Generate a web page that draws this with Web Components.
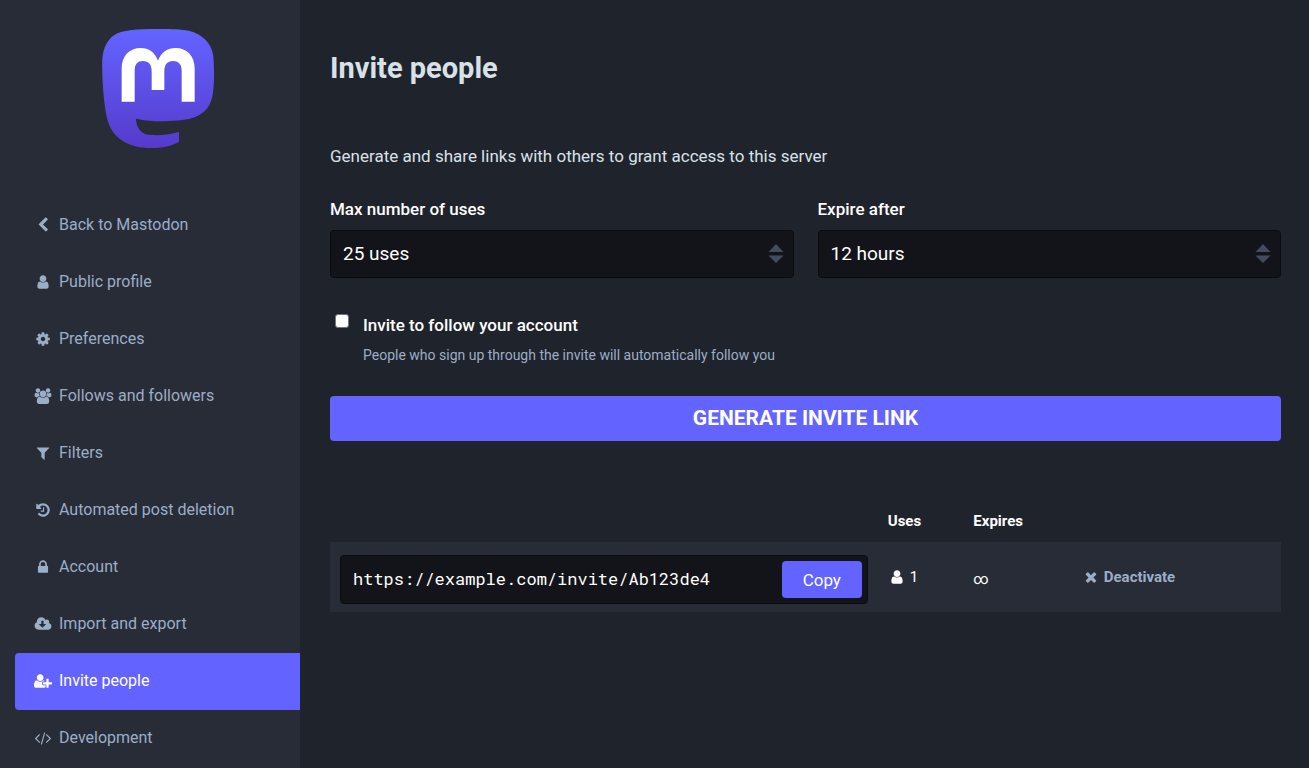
<!DOCTYPE html>
<html lang="en">
<head>
  <meta charset="utf-8">
  <meta name="viewport" content="width=device-width, initial-scale=1">
  <title>Invite people - Mastodon</title>
  <style>
    :root {
      --bg: #1f232b;
      --panel: #282c37;
      --field: #131419;
      --field-border: #0a0b0e;
      --accent: #6364ff;
      --text: #d9e1e8;
      --muted: #9baec8;
      --arrow: #444b5d;
    }
    body {
      margin: 0;
      background: var(--bg);
      color: var(--text);
      font-family: Roboto, sans-serif;
      font-size: 17px;
      line-height: 20px;
    }
  </style>
</head>
<body>
  <admin-layout>
    <mastodon-logo slot="sidebar"></mastodon-logo>
    <side-nav slot="sidebar">
      <nav-item href="#home" icon="chevron-left">Back to Mastodon</nav-item>
      <nav-item href="#profile" icon="user">Public profile</nav-item>
      <nav-item href="#preferences" icon="cog">Preferences</nav-item>
      <nav-item href="#relationships" icon="users">Follows and followers</nav-item>
      <nav-item href="#filters" icon="filter">Filters</nav-item>
      <nav-item href="#deletion" icon="history">Automated post deletion</nav-item>
      <nav-item href="#account" icon="lock">Account</nav-item>
      <nav-item href="#export" icon="cloud-download">Import and export</nav-item>
      <nav-item href="#invites" icon="user-plus" active>Invite people</nav-item>
      <nav-item href="#development" icon="code">Development</nav-item>
    </side-nav>
    <page-heading>Invite people</page-heading>
    <invite-form></invite-form>
    <invite-table></invite-table>
  </admin-layout>

  <script>
    const ICONS = {
      'chevron-left': 'M1427 301l-531 531 531 531q19 19 19 45t-19 45l-166 166q-19 19-45 19t-45-19l-742-742q-19-19-19-45t19-45l742-742q19-19 45-19t45 19l166 166q19 19 19 45t-19 45z',
      'user': 'M1536 1399q0 109-62.5 187t-150.5 78h-854q-88 0-150.5-78t-62.5-187q0-85 8.5-160.5t31.5-152 58.5-131 94-89 134.5-34.5q131 128 313 128t313-128q76 0 134.5 34.5t94 89 58.5 131 31.5 152 8.5 160.5zm-256-887q0 159-112.5 271.5t-271.5 112.5-271.5-112.5-112.5-271.5 112.5-271.5 271.5-112.5 271.5 112.5 112.5 271.5z',
      'cog': 'M1152 896q0-106-75-181t-181-75-181 75-75 181 75 181 181 75 181-75 75-181zm512-109v222q0 12-8 23t-20 13l-185 28q-19 54-39 91 35 50 107 138 10 12 10 25t-9 23q-27 37-99 108t-94 71q-12 0-26-9l-138-108q-44 23-91 38-16 136-29 186-7 28-36 28h-222q-14 0-24.5-8.5t-11.5-21.5l-28-184q-49-16-90-37l-141 107q-10 9-25 9-14 0-25-11-126-114-165-168-7-10-7-23 0-12 8-23 15-21 51-66.5t54-70.5q-27-50-41-99l-183-27q-13-2-21-12.5t-8-23.5v-222q0-12 8-23t19-13l186-28q14-46 39-92-40-57-107-138-10-12-10-24 0-10 9-23 26-36 98.5-107.5t94.5-71.5q13 0 26 10l138 107q44-23 91-38 16-136 29-186 7-28 36-28h222q14 0 24.5 8.5t11.5 21.5l28 184q49 16 90 37l142-107q9-9 24-9 13 0 25 10 129 119 165 170 7 8 7 22 0 12-8 23-15 21-51 66.5t-54 70.5q26 50 41 98l183 28q13 2 21 12.5t8 23.5z',
      'users': 'M529 896q-162 5-265 128h-134q-82 0-138-40.5t-56-118.5q0-353 124-353 6 0 43.5 21t97.5 42.5 119 21.5q67 0 133-23-5 37-5 66 0 139 81 256zm1071 637q0 120-73 189.5t-194 69.5h-874q-121 0-194-69.5t-73-189.5q0-53 3.5-103.5t14-109 26.5-108.5 43-97.5 62-81 85.5-53.5 111.5-20q10 0 43 21.5t73 48 107 48 135 21.5 135-21.5 107-48 73-48 43-21.5q61 0 111.5 20t85.5 53.5 62 81 43 97.5 26.5 108.5 14 109 3.5 103.5zm-1024-1277q0 106-75 181t-181 75-181-75-75-181 75-181 181-75 181 75 75 181zm704 384q0 159-112.5 271.5t-271.5 112.5-271.5-112.5-112.5-271.5 112.5-271.5 271.5-112.5 271.5 112.5 112.5 271.5zm576 225q0 78-56 118.5t-138 40.5h-134q-103-123-265-128 81-117 81-256 0-29-5-66 66 23 133 23 59 0 119-21.5t97.5-42.5 43.5-21q124 0 124 353zm-128-609q0 106-75 181t-181 75-181-75-75-181 75-181 181-75 181 75 75 181z',
      'filter': 'M1595 295q17 41-14 70l-493 493v742q0 42-39 59-13 5-25 5-27 0-45-19l-256-256q-19-19-19-45v-486l-493-493q-31-29-14-70 17-39 59-39h1280q42 0 59 39z',
      'history': 'M1664 896q0 156-61 298t-164 245-245 164-298 61q-172 0-327-72.5t-264-204.5q-7-10-6.5-22.5t8.5-20.5l137-138q10-9 25-9 16 2 23 12 73 95 179 147t225 52q104 0 198.5-40.5t163.5-109.5 109.5-163.5 40.5-198.5-40.5-198.5-109.5-163.5-163.5-109.5-198.5-40.5q-98 0-188 35.5t-160 101.5l137 138q31 30 14 69-17 40-59 40h-448q-26 0-45-19t-19-45v-448q0-42 40-59 39-17 69 14l130 129q107-101 244.5-156.5t284.5-55.5q156 0 298 61t245 164 164 245 61 298zm-640-288v448q0 14-9 23t-23 9h-320q-14 0-23-9t-9-23v-64q0-14 9-23t23-9h224v-352q0-14 9-23t23-9h64q14 0 23 9t9 23z',
      'lock': 'M640 768h512v-192q0-106-75-181t-181-75-181 75-75 181v192zm832 96v576q0 40-28 68t-68 28h-960q-40 0-68-28t-28-68v-576q0-40 28-68t68-28h32v-192q0-184 132-316t316-132 316 132 132 316v192h32q40 0 68 28t28 68z',
      'cloud-download': 'M1216 928q0-14-9-23t-23-9h-224v-352q0-13-9.5-22.5t-22.5-9.5h-192q-13 0-22.5 9.5t-9.5 22.5v352h-224q-13 0-22.5 9.5t-9.5 22.5q0 14 9 23l352 352q9 9 23 9t23-9l351-351q10-12 10-24zm640 224q0 159-112.5 271.5t-271.5 112.5h-1088q-185 0-316.5-131.5t-131.5-316.5q0-130 70-240t188-165q-2-30-2-43 0-212 150-362t362-150q156 0 285.5 87t188.5 231q71-62 166-62 106 0 181 75t75 181q0 76-41 138 130 31 213.5 135.5t83.5 238.5z',
      'user-plus': 'M704 896q-159 0-271.5-112.5t-112.5-271.5 112.5-271.5 271.5-112.5 271.5 112.5 112.5 271.5-112.5 271.5-271.5 112.5zm960 128h352q13 0 22.5 9.5t9.5 22.5v192q0 13-9.5 22.5t-22.5 9.5h-352v352q0 13-9.5 22.5t-22.5 9.5h-192q-13 0-22.5-9.5t-9.5-22.5v-352h-352q-13 0-22.5-9.5t-9.5-22.5v-192q0-13 9.5-22.5t22.5-9.5h352v-352q0-13 9.5-22.5t22.5-9.5h192q13 0 22.5 9.5t9.5 22.5v352zm-736 224q0 52 38 90t90 38h256v238q-68 50-171 50h-874q-121 0-194-69t-73-190q0-53 3.5-103.5t14-109 26.5-108.5 43-97.5 62-81 85.5-53.5 111.5-20q19 0 39 17 79 61 154.5 91.5t164.5 30.5 164.5-30.5 154.5-91.5q20-17 39-17 132 0 217 96h-223q-52 0-90 38t-38 90v192z',
      'code': 'M553 1399l-50 50q-10 10-23 10t-23-10l-466-466q-10-10-10-23t10-23l466-466q10-10 23-10t23 10l50 50q10 10 10 23t-10 23l-393 393 393 393q10 10 10 23t-10 23zm591-1067l-373 1291q-4 13-15.5 19.5t-23.5 2.5l-62-17q-13-4-19.5-15.5t-2.5-24.5l373-1291q4-13 15.5-19.5t23.5-2.5l62 17q13 4 19.5 15.5t2.5 24.5zm657 651l-466 466q-10 10-23 10t-23-10l-50-50q-10-10-10-23t10-23l393-393-393-393q-10-10-10-23t10-23l50-50q10-10 23-10t23 10l466 466q10 10 10 23t-10 23z',
      'times': 'M1490 1322q0 40-28 68l-136 136q-28 28-68 28t-68-28l-294-294-294 294q-28 28-68 28t-68-28l-136-136q-28-28-28-68t28-68l294-294-294-294q-28-28-28-68t28-68l136-136q28-28 68-28t68 28l294 294 294-294q28-28 68-28t68 28l136 136q28 28 28 68t-28 68l-294 294 294 294q28 28 28 68z'
    };

    class FaIcon extends HTMLElement {
      connectedCallback() {
        const name = this.getAttribute('name');
        // user-plus is drawn on a wider grid than the others
        const x = name === 'user-plus' ? 0 : -128;
        this.attachShadow({ mode: 'open' });
        this.shadowRoot.innerHTML = `
          <style>
            :host { display: inline-flex; flex: none; }
            svg { width: 18px; height: 16px; fill: currentColor; overflow: visible; }
          </style>
          <svg viewBox="${x} 0 2048 1792" aria-hidden="true"><path d="${ICONS[name]}"/></svg>
        `;
      }
    }

    class AdminLayout extends HTMLElement {
      connectedCallback() {
        this.attachShadow({ mode: 'open' });
        this.shadowRoot.innerHTML = `
          <style>
            :host {
              display: grid;
              grid-template-columns: 300px minmax(0, 1fr);
              min-height: 100vh;
            }
            aside { background: var(--panel); }
            main { padding: 50px 28px 50px 30px; }
          </style>
          <aside><slot name="sidebar"></slot></aside>
          <main><slot></slot></main>
        `;
      }
    }

    class MastodonLogo extends HTMLElement {
      connectedCallback() {
        this.attachShadow({ mode: 'open' });
        this.shadowRoot.innerHTML = `
          <style>
            :host { display: block; padding: 29px 0 49px 15px; }
            a { display: block; width: 112px; margin: 0 auto; }
            svg { display: block; width: 112px; height: 119px; }
          </style>
          <a href="#home" aria-label="Mastodon">
            <svg viewBox="36 27 336 357" aria-hidden="true">
              <defs>
                <linearGradient id="fade" x1="0" y1="0" x2="0" y2="1">
                  <stop offset="0" stop-color="#6364ff"/>
                  <stop offset="1" stop-color="#563acc"/>
                </linearGradient>
              </defs>
              <path fill="url(#fade)" d="M120 31C145 27 175 27 204 27C230 27 264 27 288 31C332 38 366 68 370 110C373 145 373 180 370 208C367 256 345 286 300 296C270 302 215 306 180 302C165 301 150 298 138 296C139 325 155 345 185 345C215 347 245 342 267 336V365C245 378 215 384 184 384C110 384 62 350 50 290C42 250 38 200 37 160C35 110 38 82 60 56C78 38 98 34 120 31Z"/>
              <path fill="#fff" d="M95 245V145C95 108 118 84 152 84C177 84 195 97 204 122C213 97 232 84 257 84C291 84 314 108 314 145V245H275V153C275 133 266 123 249 123C232 123 223 133 223 155V210H185V155C185 133 176 123 159 123C142 123 134 133 134 153V245Z"/>
            </svg>
          </a>
        `;
      }
    }

    class SideNav extends HTMLElement {
      connectedCallback() {
        this.attachShadow({ mode: 'open' });
        this.shadowRoot.innerHTML = `
          <style>
            :host { display: block; padding-left: 15px; }
          </style>
          <nav aria-label="Settings"><slot></slot></nav>
        `;
      }
    }

    class NavItem extends HTMLElement {
      connectedCallback() {
        this.attachShadow({ mode: 'open' });
        this.shadowRoot.innerHTML = `
          <style>
            :host { display: block; }
            a {
              display: flex;
              align-items: center;
              gap: 7px;
              padding: 17px 19px 19px;
              font-size: 16px;
              line-height: 21px;
              border-radius: 4px 0 0 4px;
              color: var(--muted);
              text-decoration: none;
            }
            a:hover { color: var(--text); }
            :host([active]) a { background: var(--accent); color: #fff; }
          </style>
          <a href="${this.getAttribute('href')}">
            <fa-icon name="${this.getAttribute('icon')}"></fa-icon>
            <span><slot></slot></span>
          </a>
        `;
      }
    }

    class PageHeading extends HTMLElement {
      connectedCallback() {
        this.attachShadow({ mode: 'open' });
        this.shadowRoot.innerHTML = `
          <style>
            :host { display: block; margin-bottom: 60px; }
            h1 { margin: 0; font-size: 29px; line-height: 36px; font-weight: 700; }
          </style>
          <h1><slot></slot></h1>
        `;
      }
    }

    class SelectField extends HTMLElement {
      connectedCallback() {
        const options = this.getAttribute('options').split(',');
        const value = this.getAttribute('value');
        this.attachShadow({ mode: 'open' });
        this.shadowRoot.innerHTML = `
          <style>
            :host { display: block; }
            label { display: block; margin-bottom: 11px; color: #fff; font-weight: 500; }
            .control { display: grid; align-items: center; }
            select, svg { grid-area: 1 / 1; }
            select {
              appearance: none;
              box-sizing: border-box;
              width: 100%;
              height: 48px;
              padding: 0 36px 2px 12px;
              border: 1px solid var(--field-border);
              border-radius: 4px;
              background: var(--field);
              color: #fff;
              font-family: inherit;
              font-size: 19px;
            }
            svg {
              justify-self: end;
              width: 16px;
              height: 20px;
              margin-right: 10px;
              fill: var(--arrow);
              pointer-events: none;
            }
          </style>
          <label for="field">${this.getAttribute('label')}</label>
          <div class="control">
            <select id="field">
              ${options.map(o => `<option${o === value ? ' selected' : ''}>${o}</option>`).join('')}
            </select>
            <svg viewBox="0 0 16 20" aria-hidden="true"><path d="M8 0l7.500 8H.5zM8 19l7.500-7.500H.5z"/></svg>
          </div>
        `;
      }
    }

    class CheckField extends HTMLElement {
      connectedCallback() {
        this.attachShadow({ mode: 'open' });
        this.shadowRoot.innerHTML = `
          <style>
            :host {
              display: grid;
              grid-template-columns: auto 1fr;
              column-gap: 14px;
              row-gap: 9px;
            }
            input {
              appearance: none;
              width: 14px;
              height: 14px;
              margin: 0 0 0 5px;
              border: 1px solid #767676;
              border-radius: 3px;
              background: #fff;
            }
            input:checked { background: var(--accent); }
            label { color: #fff; font-weight: 500; line-height: 22px; }
            p { grid-column: 2; margin: 0; color: var(--muted); font-size: 14px; }
          </style>
          <input type="checkbox" id="box" aria-describedby="hint">
          <label for="box"><slot></slot></label>
          <p id="hint"><slot name="hint"></slot></p>
        `;
      }
    }

    class InviteForm extends HTMLElement {
      connectedCallback() {
        this.attachShadow({ mode: 'open' });
        this.shadowRoot.innerHTML = `
          <style>
            :host { display: block; margin-bottom: 70px; }
            p { margin: 0 0 33px; }
            .row {
              display: grid;
              grid-template-columns: 1fr 1fr;
              gap: 24px;
              margin-bottom: 36px;
            }
            check-field { margin-bottom: 31px; }
            button {
              display: block;
              width: 100%;
              padding: 9px;
              border: 0;
              border-radius: 4px;
              background: var(--accent);
              color: #fff;
              font-family: inherit;
              font-size: 21px;
              font-weight: 700;
              line-height: 27px;
              text-transform: uppercase;
            }
          </style>
          <form>
            <p>Generate and share links with others to grant access to this server</p>
            <div class="row">
              <select-field label="Max number of uses" value="25 uses"
                options="No limit,1 use,5 uses,10 uses,25 uses,50 uses,100 uses"></select-field>
              <select-field label="Expire after" value="12 hours"
                options="Never,30 minutes,1 hour,6 hours,12 hours,1 day,1 week"></select-field>
            </div>
            <check-field>
              Invite to follow your account
              <span slot="hint">People who sign up through the invite will automatically follow you</span>
            </check-field>
            <button type="button">Generate invite link</button>
          </form>
        `;
      }
    }

    class CopyField extends HTMLElement {
      connectedCallback() {
        this.attachShadow({ mode: 'open' });
        this.shadowRoot.innerHTML = `
          <style>
            :host {
              display: flex;
              padding: 5px;
              border: 1px solid var(--field-border);
              border-radius: 4px;
              background: var(--field);
            }
            input {
              flex: 1;
              min-width: 0;
              padding: 0 7px 2px;
              border: 0;
              background: transparent;
              color: #fff;
              font-family: "Roboto Mono", "DejaVu Sans Mono", monospace;
              font-size: 17px;
            }
            button {
              width: 80px;
              height: 37px;
              border: 0;
              border-radius: 4px;
              background: var(--accent);
              color: #fff;
              font-family: inherit;
              font-size: 17px;
            }
          </style>
          <input type="text" readonly aria-label="Invite link" value="${this.getAttribute('value')}">
          <button type="button">Copy</button>
        `;
        this.shadowRoot.querySelector('button').addEventListener('click', () => {
          this.shadowRoot.querySelector('input').select();
          document.execCommand('copy');
        });
      }
    }

    class InviteTable extends HTMLElement {
      connectedCallback() {
        this.attachShadow({ mode: 'open' });
        this.shadowRoot.innerHTML = `
          <style>
            :host { display: block; }
            table {
              width: 100%;
              table-layout: fixed;
              border-collapse: collapse;
              color: #fff;
              font-size: 15px;
            }
            .link { width: 57.6%; }
            .uses { width: 9%; }
            .expires { width: 11.4%; }
            th { padding: 0 10px 11px; text-align: left; font-weight: 700; }
            td { padding: 3px 10px 0; background: var(--panel); }
            td:first-child { padding: 13px 10px 8px; }
            .count, a { display: inline-flex; align-items: center; gap: 4px; }
            a { color: var(--muted); font-weight: 700; text-decoration: none; }
          </style>
          <table>
            <colgroup><col class="link"><col class="uses"><col class="expires"><col></colgroup>
            <thead>
              <tr><th></th><th>Uses</th><th>Expires</th><th></th></tr>
            </thead>
            <tbody>
              <tr>
                <td><copy-field value="https://example.com/invite/Ab123de4"></copy-field></td>
                <td><span class="count"><fa-icon name="user"></fa-icon>1</span></td>
                <td>∞</td>
                <td><a href="#deactivate"><fa-icon name="times"></fa-icon>Deactivate</a></td>
              </tr>
            </tbody>
          </table>
        `;
      }
    }

    customElements.define('fa-icon', FaIcon);
    customElements.define('admin-layout', AdminLayout);
    customElements.define('mastodon-logo', MastodonLogo);
    customElements.define('side-nav', SideNav);
    customElements.define('nav-item', NavItem);
    customElements.define('page-heading', PageHeading);
    customElements.define('select-field', SelectField);
    customElements.define('check-field', CheckField);
    customElements.define('invite-form', InviteForm);
    customElements.define('copy-field', CopyField);
    customElements.define('invite-table', InviteTable);
  </script>
</body>
</html>
